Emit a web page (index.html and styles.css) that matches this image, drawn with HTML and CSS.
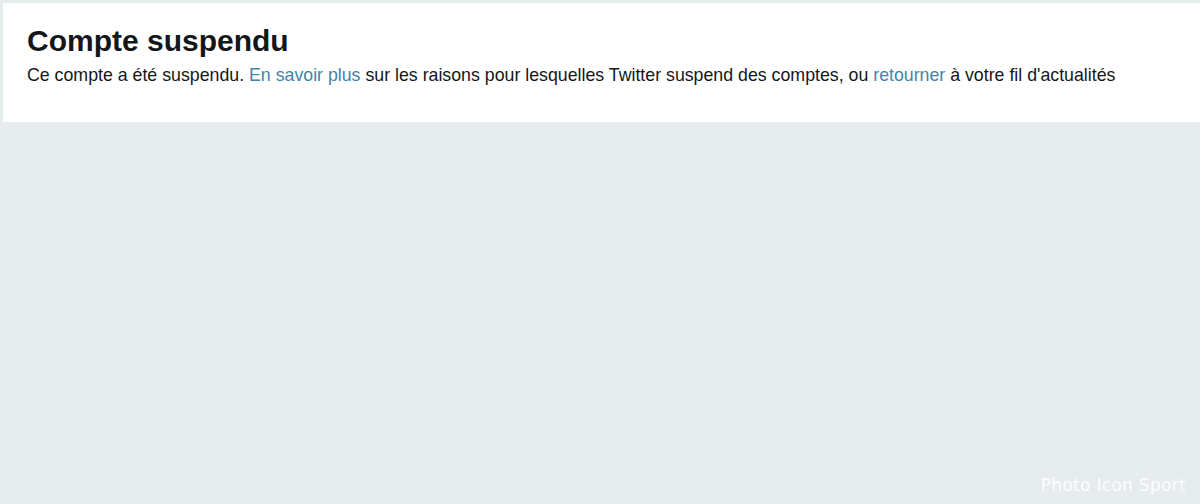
FILE: index.html
```html
<!DOCTYPE html>
<html lang="fr">
<head>
<meta charset="utf-8">
<title>Compte suspendu</title>
<link rel="stylesheet" href="styles.css">
</head>
<body>
<main class="page">
  <section class="card">
    <h1 class="title">Compte suspendu</h1>
    <p class="text">Ce compte a été suspendu. <a class="link" href="#">En savoir plus</a> sur les raisons pour lesquelles Twitter suspend des comptes, ou <a class="link" href="#">retourner</a> à votre fil d'actualités</p>
  </section>
  <div class="credit">Photo Icon Sport</div>
</main>
</body>
</html>
```
FILE: styles.css
```css
html, body {
  margin: 0;
  padding: 0;
  height: 100%;
}
body {
  background: #e6ebee;
  font-family: "Liberation Sans", Arial, sans-serif;
  color: #14171a;
  overflow: hidden;
}
.page {
  position: relative;
  height: 504px;
  padding: 3px 0 0 3px;
  box-sizing: border-box;
}
.card {
  background: #ffffff;
  height: 119px;
  box-sizing: border-box;
  padding: 20px 24px 0 24px;
}
.title {
  margin: 0;
  font-size: 30px;
  font-weight: 700;
  line-height: 36px;
  color: #14171a;
}
.text {
  margin: 4px 0 0 0;
  font-size: 17.75px;
  line-height: 24px;
  color: #14171a;
}
.link {
  color: #4384aa;
  text-decoration: none;
}
.credit {
  position: absolute;
  right: 14px;
  bottom: 9px;
  font-family: "DejaVu Sans", sans-serif;
  font-size: 17px;
  color: rgba(255,255,255,0.92);
  letter-spacing: 0.3px;
}
```
